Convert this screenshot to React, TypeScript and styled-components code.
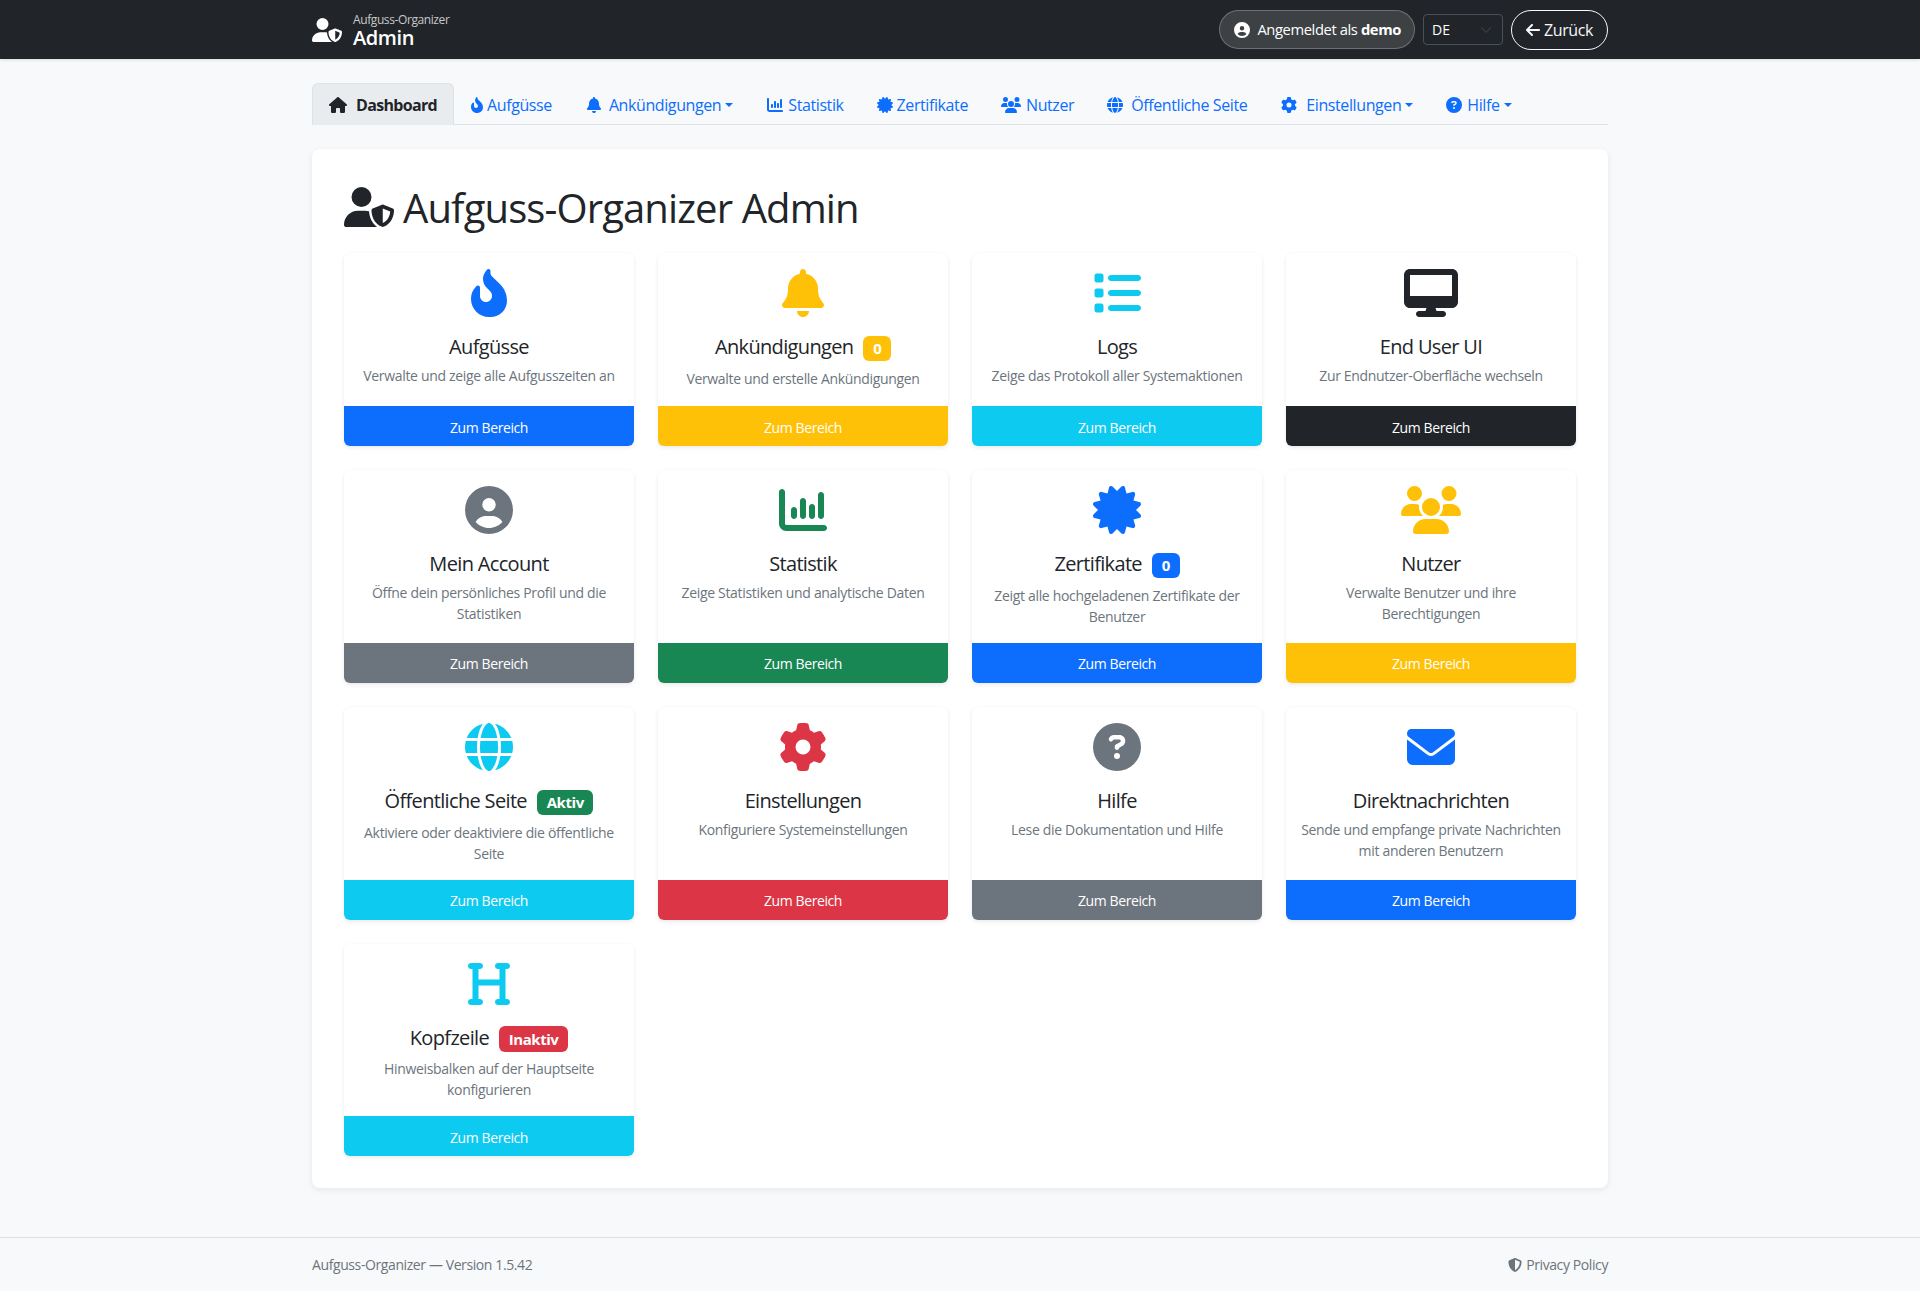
import type { ComponentType, ReactNode } from "react";
import styled, { createGlobalStyle } from "styled-components";
import {
  FaArrowLeft,
  FaBell,
  FaCertificate,
  FaChartColumn,
  FaCircleQuestion,
  FaCircleUser,
  FaDesktop,
  FaEnvelope,
  FaFireFlameCurved,
  FaGear,
  FaGlobe,
  FaHeading,
  FaHouse,
  FaList,
  FaShieldHalved,
  FaUserShield,
  FaUsers,
} from "react-icons/fa6";

const colors = {
  primary: "#0d6efd",
  warning: "#ffc107",
  info: "#0dcaf0",
  dark: "#212529",
  secondary: "#6c757d",
  success: "#198754",
  danger: "#dc3545",
};

type Tone = keyof typeof colors;

const GlobalStyle = createGlobalStyle`
  * { box-sizing: border-box; }
  html, body { margin: 0; padding: 0; }
  body {
    background: #f8f9fa;
    color: #212529;
    font-family: "Open Sans", "Noto Sans", "Liberation Sans", sans-serif;
    font-size: 16px;
    line-height: 1.5;
    letter-spacing: -0.025em;
  }
`;

const Page = styled.div`
  display: flex;
  flex-direction: column;
  min-height: 100vh;
`;

const Container = styled.div`
  width: 100%;
  max-width: 1320px;
  margin: 0 auto;
  padding: 0 12px;
`;

const TopBar = styled.header`
  background: #212529;
  color: #fff;
  height: 59px;
  box-shadow: 0 1px 3px rgba(0, 0, 0, 0.12);
`;

const TopBarInner = styled(Container)`
  display: flex;
  align-items: center;
  justify-content: space-between;
  height: 100%;
`;

const Brand = styled.div`
  display: flex;
  align-items: center;
  gap: 11px;

  svg {
    height: 24px;
    width: 30px;
  }
`;

const BrandText = styled.div`
  display: flex;
  flex-direction: column;
  padding-top: 2px;
`;

const BrandSmall = styled.span`
  font-size: 12px;
  line-height: 14px;
  color: rgba(255, 255, 255, 0.75);
`;

const BrandBig = styled.span`
  font-size: 20px;
  line-height: 22px;
  font-weight: 600;
`;

const TopActions = styled.div`
  display: flex;
  align-items: center;
  gap: 8px;
`;

const UserPill = styled.div`
  display: flex;
  align-items: center;
  gap: 7px;
  height: 39px;
  padding: 0 13px 0 14px;
  border: 1px solid rgba(255, 255, 255, 0.25);
  border-radius: 20px;
  background: rgba(255, 255, 255, 0.13);
  font-size: 14.75px;

  svg {
    height: 16px;
    width: 16px;
  }
`;

const LangSelect = styled.select`
  width: 80px;
  height: 31px;
  padding: 0 8px;
  appearance: none;
  color: #fff;
  font: inherit;
  font-size: 14px;
  border: 1px solid #495057;
  border-radius: 4px;
  background: #212529
    url("data:image/svg+xml,%3csvg xmlns='http://www.w3.org/2000/svg' viewBox='0 0 16 16'%3e%3cpath fill='none' stroke='%23343a40' stroke-linecap='round' stroke-linejoin='round' stroke-width='2' d='m2 5 6 6 6-6'/%3e%3c/svg%3e")
    no-repeat right 8px center / 16px 12px;
`;

const BackButton = styled.a`
  display: flex;
  align-items: center;
  gap: 4px;
  height: 40px;
  padding: 0 14px;
  border: 1px solid #f8f9fa;
  border-radius: 20px;
  color: #f8f9fa;

  svg {
    height: 16px;
    width: 14px;
  }
`;

const Main = styled(Container)`
  padding-top: 24px;
`;

const Tabs = styled.nav`
  display: flex;
  align-items: stretch;
  height: 42px;
  border-bottom: 1px solid #dee2e6;
  margin-bottom: 24px;
`;

const Tab = styled.a<{ $active?: boolean; $left?: number }>`
  display: flex;
  align-items: center;
  padding: 2px 16px 0;
  margin-left: ${(p) => p.$left ?? 0}px;
  margin-bottom: -1px;
  color: ${(p) => (p.$active ? "#212529" : colors.primary)};
  font-weight: ${(p) => (p.$active ? 700 : 400)};
  letter-spacing: ${(p) => (p.$active ? "-0.042em" : "-0.025em")};
  background: ${(p) => (p.$active ? "#e9ecef" : "transparent")};
  border: 1px solid ${(p) => (p.$active ? "#dee2e6" : "transparent")};
  border-bottom-color: ${(p) => (p.$active ? "#e9ecef" : "transparent")};
  border-radius: 6px 6px 0 0;
`;

const TabIcon = styled.span<{ $gap: number; $ratio: number }>`
  display: flex;
  margin-right: ${(p) => p.$gap}px;

  svg {
    height: 16px;
    width: ${(p) => 16 * p.$ratio}px;
  }
`;

const Caret = styled.span`
  width: 0;
  height: 0;
  margin-left: 4px;
  border-top: 4.8px solid currentColor;
  border-left: 4.8px solid transparent;
  border-right: 4.8px solid transparent;
`;

const Panel = styled.section`
  background: #fff;
  border-radius: 8px;
  padding: 32px;
  box-shadow: 0 2px 6px rgba(0, 0, 0, 0.075);
`;

const PageTitle = styled.h1`
  display: flex;
  align-items: flex-start;
  gap: 9px;
  height: 48px;
  margin: 0 0 24px;
  font-size: 40px;
  font-weight: 400;
  line-height: 48px;
  letter-spacing: -0.022em;

  svg {
    height: 40px;
    width: 50px;
    margin-top: 6px;
  }
`;

const TitleText = styled.span`
  margin-top: 3px;
`;

const CardGrid = styled.div`
  display: grid;
  grid-template-columns: repeat(4, 1fr);
  gap: 24px;
`;

const Card = styled.article`
  display: flex;
  flex-direction: column;
  min-height: 193px;
  border-radius: 6px;
  background: #fff;
  box-shadow: 0 2px 4px rgba(0, 0, 0, 0.075), 0 0 2px rgba(0, 0, 0, 0.03);
`;

const CardBody = styled.div`
  flex: 1;
  padding: 16px 12px;
  text-align: center;
`;

const CardIcon = styled.div<{ $tone: Tone; $ratio: number }>`
  display: flex;
  justify-content: center;
  align-items: center;
  height: 48px;
  margin-bottom: 16px;
  color: ${(p) => colors[p.$tone]};

  svg {
    height: 48px;
    width: ${(p) => 48 * p.$ratio}px;
  }
`;

const CardTitle = styled.h5`
  margin: 0 0 6px;
  padding-top: 2px;
  font-size: 20px;
  font-weight: 400;
  line-height: 24px;
  letter-spacing: -0.033em;
`;

const Badge = styled.span<{ $tone: Tone }>`
  display: inline-block;
  margin: 0 0 0.5px 10px;
  padding: 5.25px 9.75px;
  border-radius: 6px;
  background: ${(p) => colors[p.$tone]};
  color: #fff;
  font-size: 15px;
  font-weight: 700;
  line-height: 1;
  letter-spacing: -0.03em;
  vertical-align: baseline;
`;

const CardText = styled.p`
  margin: 0;
  color: #6c757d;
  font-size: 14px;
  line-height: 21px;
  letter-spacing: -0.023em;
`;

const CardLink = styled.a<{ $tone: Tone }>`
  display: block;
  padding: 10.5px 12px 8.5px;
  border-radius: 0 0 6px 6px;
  background: ${(p) => colors[p.$tone]};
  color: #fff;
  font-size: 14px;
  line-height: 21px;
  text-align: center;
`;

const FootBar = styled.footer`
  margin-top: auto;
  border-top: 1px solid #dee2e6;
  color: #6c757d;
  font-size: 14px;
  line-height: 21px;
`;

const FootSpacer = styled.div`
  height: 48px;
`;

const FootInner = styled(Container)`
  display: flex;
  justify-content: space-between;
  align-items: center;
  padding-top: 16px;
  padding-bottom: 16px;
`;

const PrivacyLink = styled.a`
  display: flex;
  align-items: center;
  gap: 4px;

  svg {
    height: 14px;
    width: 14px;
  }
`;

type TabItem = {
  label: string;
  icon: ComponentType;
  gap: number;
  ratio?: number;
  left?: number;
  active?: boolean;
  menu?: boolean;
};

const tabs: TabItem[] = [
  { label: "Dashboard", icon: FaHouse, gap: 9, ratio: 1.125, active: true },
  { label: "Aufgüsse", icon: FaFireFlameCurved, gap: 4, ratio: 0.75 },
  { label: "Ankündigungen", icon: FaBell, gap: 7, left: 0, menu: true },
  { label: "Statistik", icon: FaChartColumn, gap: 5, left: 0 },
  { label: "Zertifikate", icon: FaCertificate, gap: 4, left: -1 },
  { label: "Nutzer", icon: FaUsers, gap: 5, ratio: 1.25, left: -1 },
  { label: "Öffentliche Seite", icon: FaGlobe, gap: 8, left: -1 },
  { label: "Einstellungen", icon: FaGear, gap: 9, left: 0, menu: true },
  { label: "Hilfe", icon: FaCircleQuestion, gap: 5, left: -1, menu: true },
];

type CardItem = {
  title: string;
  text: string;
  icon: ComponentType;
  tone: Tone;
  ratio?: number;
  badge?: { label: string; tone: Tone };
};

const cards: CardItem[] = [
  { title: "Aufgüsse", text: "Verwalte und zeige alle Aufgusszeiten an", icon: FaFireFlameCurved, tone: "primary" },
  {
    title: "Ankündigungen",
    text: "Verwalte und erstelle Ankündigungen",
    icon: FaBell,
    tone: "warning",
    badge: { label: "0", tone: "warning" },
  },
  { title: "Logs", text: "Zeige das Protokoll aller Systemaktionen", icon: FaList, tone: "info" },
  { title: "End User UI", text: "Zur Endnutzer-Oberfläche wechseln", icon: FaDesktop, tone: "dark", ratio: 1.125 },
  {
    title: "Mein Account",
    text: "Öffne dein persönliches Profil und die Statistiken",
    icon: FaCircleUser,
    tone: "secondary",
  },
  { title: "Statistik", text: "Zeige Statistiken und analytische Daten", icon: FaChartColumn, tone: "success" },
  {
    title: "Zertifikate",
    text: "Zeigt alle hochgeladenen Zertifikate der Benutzer",
    icon: FaCertificate,
    tone: "primary",
    badge: { label: "0", tone: "primary" },
  },
  { title: "Nutzer", text: "Verwalte Benutzer und ihre Berechtigungen", icon: FaUsers, tone: "warning", ratio: 1.25 },
  {
    title: "Öffentliche Seite",
    text: "Aktiviere oder deaktiviere die öffentliche Seite",
    icon: FaGlobe,
    tone: "info",
    badge: { label: "Aktiv", tone: "success" },
  },
  { title: "Einstellungen", text: "Konfiguriere Systemeinstellungen", icon: FaGear, tone: "danger" },
  { title: "Hilfe", text: "Lese die Dokumentation und Hilfe", icon: FaCircleQuestion, tone: "secondary" },
  {
    title: "Direktnachrichten",
    text: "Sende und empfange private Nachrichten mit anderen Benutzern",
    icon: FaEnvelope,
    tone: "primary",
  },
  {
    title: "Kopfzeile",
    text: "Hinweisbalken auf der Hauptseite konfigurieren",
    icon: FaHeading,
    tone: "info",
    badge: { label: "Inaktiv", tone: "danger" },
  },
];

const DashboardCard = ({ item }: { item: CardItem }): ReactNode => {
  const Icon = item.icon;
  return (
    <Card>
      <CardBody>
        <CardIcon $tone={item.tone} $ratio={item.ratio ?? 1}>
          <Icon />
        </CardIcon>
        <CardTitle>
          {item.title}
          {item.badge && <Badge $tone={item.badge.tone}>{item.badge.label}</Badge>}
        </CardTitle>
        <CardText>{item.text}</CardText>
      </CardBody>
      <CardLink $tone={item.tone}>Zum Bereich</CardLink>
    </Card>
  );
};

export default function App() {
  return (
    <Page>
      <GlobalStyle />
      <TopBar>
        <TopBarInner>
          <Brand>
            <FaUserShield />
            <BrandText>
              <BrandSmall>Aufguss-Organizer</BrandSmall>
              <BrandBig>Admin</BrandBig>
            </BrandText>
          </Brand>
          <TopActions>
            <UserPill>
              <FaCircleUser />
              <span>
                Angemeldet als <strong>demo</strong>
              </span>
            </UserPill>
            <LangSelect defaultValue="DE">
              <option value="DE">DE</option>
              <option value="EN">EN</option>
            </LangSelect>
            <BackButton>
              <FaArrowLeft />
              Zurück
            </BackButton>
          </TopActions>
        </TopBarInner>
      </TopBar>

      <Main>
        <Tabs>
          {tabs.map((tab) => {
            const Icon = tab.icon;
            return (
              <Tab key={tab.label} $active={tab.active} $left={tab.left}>
                <TabIcon $gap={tab.gap} $ratio={tab.ratio ?? 1}>
                  <Icon />
                </TabIcon>
                {tab.label}
                {tab.menu && <Caret />}
              </Tab>
            );
          })}
        </Tabs>

        <Panel>
          <PageTitle>
            <FaUserShield />
            <TitleText>Aufguss-Organizer Admin</TitleText>
          </PageTitle>
          <CardGrid>
            {cards.map((item) => (
              <DashboardCard key={item.title} item={item} />
            ))}
          </CardGrid>
        </Panel>
      </Main>

      <FootSpacer />
      <FootBar>
        <FootInner>
          <span>Aufguss-Organizer — Version 1.5.42</span>
          <PrivacyLink>
            <FaShieldHalved />
            Privacy Policy
          </PrivacyLink>
        </FootInner>
      </FootBar>
    </Page>
  );
}
